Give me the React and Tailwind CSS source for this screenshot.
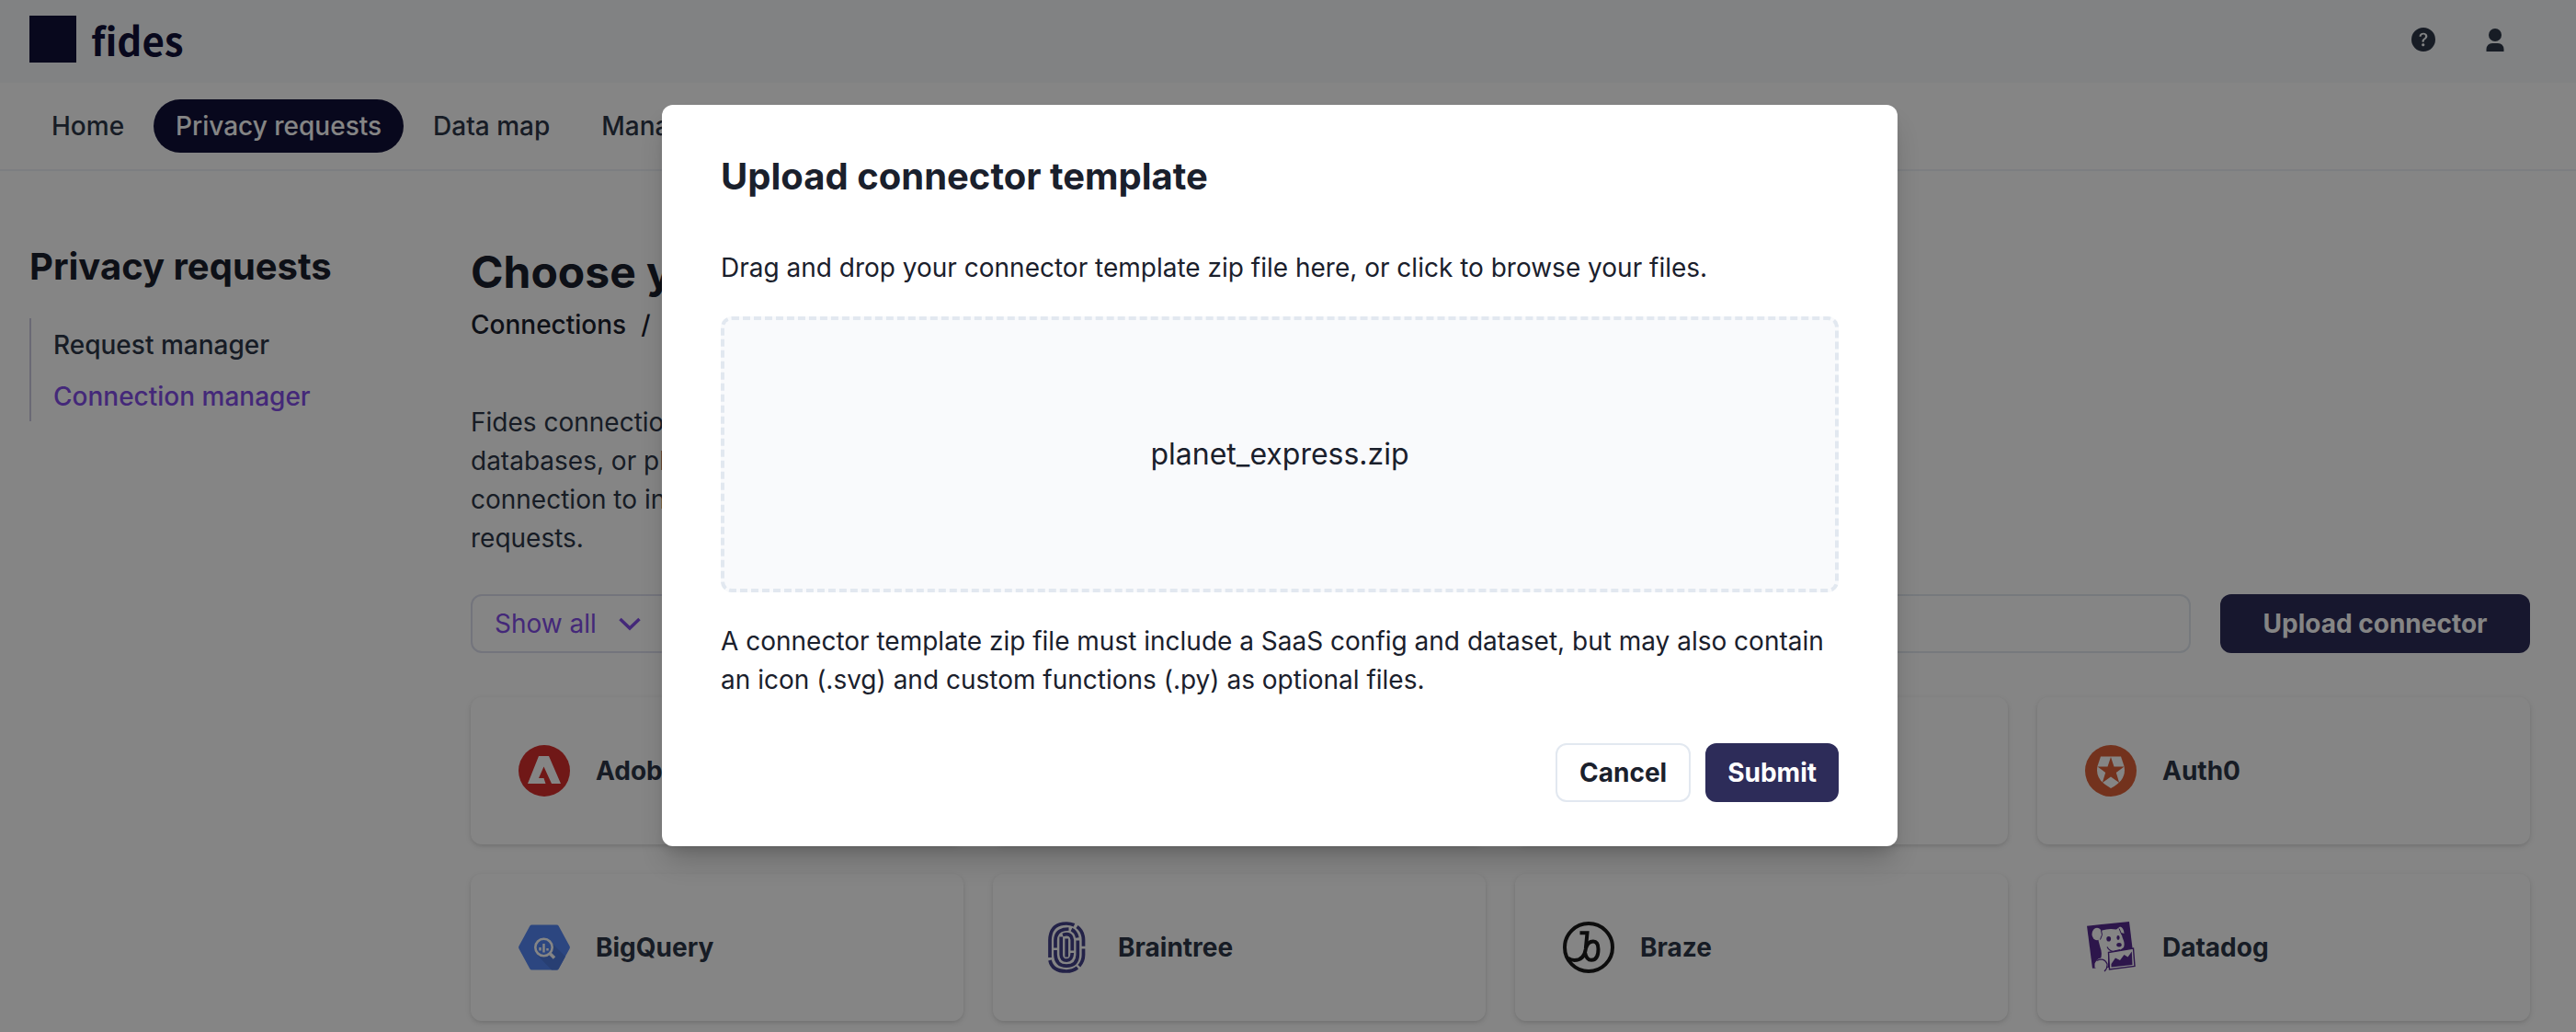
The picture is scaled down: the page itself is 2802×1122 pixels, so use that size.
import { BsQuestionCircleFill } from "react-icons/bs";

const NAV = ["Home", "Privacy requests", "Data map", "Management"];

function AdobeLogo() {
  return (
    <svg viewBox="0 0 56 56" className="size-14" aria-hidden="true">
      <circle cx="28" cy="28" r="28" fill="#d72e2c" />
      <path d="M22 12h11L46 42H36L27.500 23.500 22 36h5.500L29.500 42H10z" fill="#fff" />
    </svg>
  );
}

function AmplitudeLogo() {
  return (
    <svg viewBox="0 0 56 56" className="size-14" aria-hidden="true">
      <circle cx="28" cy="28" r="28" fill="#1e61f0" />
      <path d="M10 30h36M16 40c6 0 8-26 12-26s6 26 12 26" fill="none" stroke="#fff" strokeWidth="3" />
    </svg>
  );
}

function AuthLogo() {
  return (
    <svg viewBox="0 0 56 56" className="size-14" aria-hidden="true">
      <circle cx="28" cy="28" r="28" fill="#dd6138" />
      <path d="M17 12.500h22l3.500 10.500c2 10-2.500 17.500-14.500 24-12-6.500-16.500-14-14.500-24z" fill="#fff" />
      <path d="M28 13l3.500 10.500h11L33.800 30 37.200 41 28 34.500 18.800 41l3.400-11-8.700-6.500h11z" fill="#dd6138" />
    </svg>
  );
}

function BigQueryLogo() {
  return (
    <svg viewBox="0 0 56 56" className="size-14" aria-hidden="true">
      <path d="M14.500 3.500h27q1.500 0 2.200 1.300L55.500 26.500q.8 1.500 0 3L43.700 51.200q-.7 1.300-2.200 1.300h-27q-1.500 0-2.200-1.300L.5 29.500q-.8-1.500 0-3L12.300 4.800q.7-1.300 2.200-1.300z" fill="#5587f5" />
      <path d="M35 22L51 38l-7.300 13.200q-.7 1.300-2.200 1.300H36L21 37z" fill="#4d79dc" />
      <circle cx="27.500" cy="28" r="9.200" fill="#5587f5" stroke="#fff" strokeWidth="2.600" />
      <path d="M34.500 35l4.500 4.500" stroke="#fff" strokeWidth="3.600" />
      <path d="M23.500 28v3.500M27.500 24v9.500M31.500 29v2.500" stroke="#fff" strokeWidth="2.400" />
    </svg>
  );
}

function BraintreeLogo() {
  return (
    <svg viewBox="0 0 56 56" className="size-14" fill="none" stroke="#44418a" strokeWidth="3.700" aria-hidden="true">
      <path d="M10 39V20Q10.500 2 28 2q4.500 0 8.500 1.800" />
      <path d="M39.500 5.500Q46.500 10.500 46.500 20V26.800" />
      <path d="M46.500 29.500V36Q46.500 43 41.800 48.200" />
      <path d="M10 42Q12.500 54 28 54q7 0 12-4" />
      <path d="M16 28.500V20Q16.500 8 30.500 8" />
      <path d="M33.500 8.500Q38.500 11 39.800 17.500" />
      <path d="M16 31V36Q16.500 48 28 48.200 40 48 40.300 36V20.500" />
      <path d="M24 14.500Q33.500 11.500 34.300 20V31.500" />
      <path d="M22.200 16.500V36Q22.500 42.200 28.200 42.200 34 42.200 34.300 34" />
      <path d="M28.200 18.500V38.500" />
    </svg>
  );
}

function BrazeLogo() {
  return (
    <svg viewBox="0 0 56 56" className="size-14" fill="none" stroke="#1a1a1a" strokeWidth="4" aria-hidden="true">
      <circle cx="28" cy="28" r="26" />
      <path d="M18.500 12.200H26.500L24.800 30Q23 42 12.500 42 8.500 42 5.500 39.500" />
      <path d="M25 29Q27 21.500 33 21.500 38.500 21.500 38.500 30 38.500 41.800 31 41.800 25.500 41.800 24.200 34" />
    </svg>
  );
}

function DatadogLogo() {
  return (
    <svg viewBox="0 0 56 56" className="size-14" aria-hidden="true">
      <path d="M2 4.700L48 0l6 48.700L8 50.700z" fill="#562b91" />
      <path d="M18.500 9.500Q26 7 34 8.500L38 5.500Q42 6 42.500 13L39.500 12Q40 16 41.500 19.500 43.500 24 42 28L38 31 25 33.500V49L10.500 50 10.500 45.500Q13 41 17 40.500 19 34 16.500 28L14.500 20.500z" fill="#fff" />
      <ellipse cx="13" cy="13.500" rx="5.500" ry="6.800" fill="#fff" />
      <path d="M17.500 9.500Q20 14 16.500 19.500M37 7.500l3 7" fill="none" stroke="#562b91" strokeWidth="1" />
      <ellipse cx="17.500" cy="47.500" rx="6.500" ry="8" fill="#fff" />
      <path d="M12.500 42.500Q21 38.500 24 46 24.500 51 21 54" fill="none" stroke="#562b91" strokeWidth="1.200" />
      <path d="M25.500 33.500L52.500 29l1.500 19.500L26.500 52z" fill="#fff" stroke="#562b91" strokeWidth="1.400" />
      <path d="M28.500 49.500V46l4.500-6.500 5 2.500 4.500-6 4 2.500 4.300-6 .7 14.500z" fill="#562b91" />
      <path d="M24 27.500Q27 33 32 32.200L38 30.500" fill="none" stroke="#562b91" strokeWidth="1.200" />
      <ellipse cx="25.700" cy="18.700" rx="2.400" ry="2.800" fill="#562b91" />
      <ellipse cx="36" cy="17.500" rx="1.600" ry="2.400" fill="#562b91" />
      <ellipse cx="37" cy="25.300" rx="2.700" ry="2.200" fill="#562b91" />
    </svg>
  );
}

const CONNECTORS = [
  { name: "Adobe Campaign", Logo: AdobeLogo },
  { name: "Amplitude", Logo: AmplitudeLogo },
  { name: "Asana", Logo: AmplitudeLogo },
  { name: "Auth0", Logo: AuthLogo },
  { name: "BigQuery", Logo: BigQueryLogo },
  { name: "Braintree", Logo: BraintreeLogo },
  { name: "Braze", Logo: BrazeLogo },
  { name: "Datadog", Logo: DatadogLogo },
];

export default function App() {
  return (
    <div className="relative h-screen overflow-hidden bg-white font-['Inter',sans-serif] text-[28px] leading-[42px] text-[#1a202c]">
      <header className="flex h-[90px] items-center justify-between bg-[#f7fafc] pr-[75px] pl-8">
        <a href="#home" className="flex items-center gap-4 pb-1.5 text-[#111139]">
          <span className="size-[51px] bg-[#111139]" />
          <span className="font-['Noto_Sans_CJK_SC',sans-serif] text-[42px] leading-[51px] font-bold">fides</span>
        </a>
        <div className="flex items-center gap-[52px] pb-1 text-[#2d3748]">
          <button type="button" aria-label="Help">
            <BsQuestionCircleFill className="size-[26px]" />
          </button>
          <button type="button" aria-label="Account">
            <svg viewBox="0 0 26 26" className="size-[26px]" fill="currentColor" aria-hidden="true">
              <circle cx="13" cy="8" r="7" />
              <path d="M3.500 26v-2.500Q4 17 10 17h6q6 0 6.500 6.500V26z" />
            </svg>
          </button>
        </div>
      </header>

      <nav className="flex gap-2 border-b-2 border-[#edf2f7] px-8 py-[18px] font-medium text-[#2d3748]">
        {NAV.map((item) => (
          <a
            key={item}
            href="#nav"
            className={item === "Privacy requests" ? "rounded-full bg-[#111139] px-6 py-2 text-white" : "rounded-full px-6 py-2"}
          >
            {item}
          </a>
        ))}
      </nav>

      <div className="flex pt-20 pr-[50px] pl-8">
        <aside className="w-[480px] shrink-0">
          <h2 className="text-[40px] leading-[48px] font-bold">Privacy requests</h2>
          <ul className="mt-8 border-l-2 border-[#cbc9e0] pl-6 font-medium">
            <li className="pt-2 pb-1.5">
              <a href="#requests" className="text-[#2d3748]">Request manager</a>
            </li>
            <li className="pt-2 pb-1.5">
              <a href="#connections" className="text-[#824ee8]">Connection manager</a>
            </li>
          </ul>
        </aside>

        <main className="grow">
          <h1 className="text-[48px] leading-[60px] font-bold">Choose your connection</h1>
          <div className="mt-1.5 flex gap-4 font-medium">
            <a href="#connections">Connections</a>
            <span>/</span>
            <span>New connection</span>
          </div>
          <p className="mt-16 max-w-[1100px] text-[#2d3748]">
            Fides connections are integrations with your own
            <br />
            databases, or platforms that you use. Choose the
            <br />
            connection to include in the handling of privacy
            <br />
            requests.
          </p>

          <div className="mt-10 flex gap-8">
            <button type="button" className="flex h-16 w-60 items-center gap-6 rounded-xl border-2 border-[#dddfee] px-6 text-[#824ee8]">
              Show all
              <svg viewBox="0 0 24 24" className="size-6" fill="none" stroke="currentColor" strokeWidth="3.500" aria-hidden="true">
                <path d="M1.500 7l10.500 10L22.500 7" />
              </svg>
            </button>
            <input type="search" aria-label="Search" className="h-16 grow rounded-xl border-2 border-[#e2e8f0] px-8" />
            <button type="button" className="h-16 w-[337px] rounded-xl bg-[#2d2c59] font-bold text-white">
              Upload connector
            </button>
          </div>

          <div className="mt-12 grid grid-cols-4 gap-8">
            {CONNECTORS.map(({ name, Logo }) => (
              <button
                key={name}
                type="button"
                className="flex h-40 items-center gap-7 rounded-xl px-[52px] font-bold text-[#2d3748] shadow-[0_2px_6px_rgba(0,0,0,0.1),0_2px_4px_rgba(0,0,0,0.06)]"
              >
                <Logo />
                {name}
              </button>
            ))}
          </div>
        </main>
      </div>

      <div className="absolute inset-0 bg-black/48 pt-[114px] pr-[18px]">
        <div
          role="dialog"
          aria-modal="true"
          aria-labelledby="dialog-title"
          className="mx-auto max-w-[1344px] rounded-xl bg-white px-16 py-12 shadow-[0_20px_30px_-6px_rgba(0,0,0,0.2),0_8px_12px_-4px_rgba(0,0,0,0.08)]"
        >
          <h2 id="dialog-title" className="text-[40px] leading-[60px] font-bold">Upload connector template</h2>
          <p className="mt-12">Drag and drop your connector template zip file here, or click to browse your files.</p>
          <button
            type="button"
            className="mt-8 h-[300px] w-full rounded-xl border-4 border-dashed border-[#e2e8f0] bg-[#f9fafc] text-[32px]"
          >
            planet_express.zip
          </button>
          <p className="mt-8">
            A connector template zip file must include a SaaS config and dataset, but may also contain an icon (.svg) and
            custom functions (.py) as optional files.
          </p>
          <div className="mt-12 flex justify-end gap-4 font-bold">
            <button type="button" className="h-16 rounded-xl border-2 border-[#e2e8f0] px-6">Cancel</button>
            <button type="button" className="h-16 rounded-xl bg-[#2d2c59] px-6 text-white">Submit</button>
          </div>
        </div>
      </div>
    </div>
  );
}
